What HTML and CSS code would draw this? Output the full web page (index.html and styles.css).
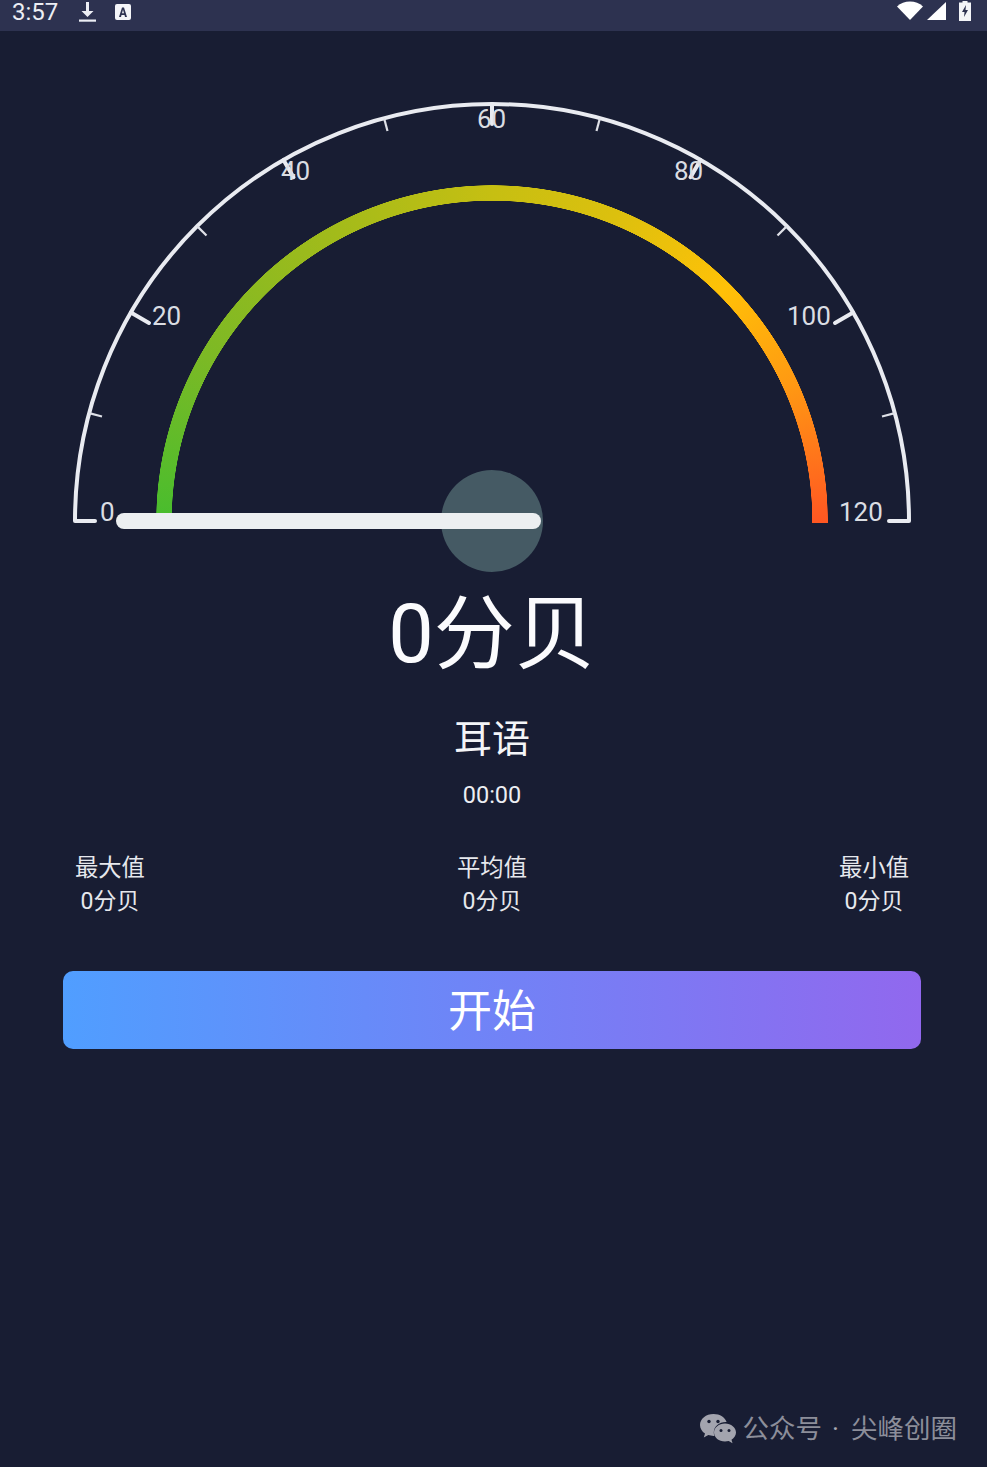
FILE: index.html
```html
<!DOCTYPE html>
<html lang="zh-CN">
<head>
<meta charset="utf-8">
<title>分贝仪</title>
<link rel="stylesheet" href="styles.css">
</head>
<body>
<div class="status-bar">
  <div class="status-left">
    <span class="time">3:57</span>
    <svg class="ic-download" viewBox="0 0 17 20"><path d="M7 0h3v9h4.500L8.500 15 2.500 9H7z" fill="#eceef4"/><rect x="0" y="17.500" width="17" height="2.200" fill="#eceef4"/></svg>
    <svg class="ic-a" viewBox="0 0 16 16"><rect width="16" height="16" rx="2" fill="#f4f5f8"/><path d="M4 13 7 3.500h2L12 13h-2l-.5-2h-3L6 13zM7 9.300h2L8 5.800z" fill="#2d3250"/></svg>
  </div>
  <div class="status-right">
    <svg class="ic-wifi" viewBox="0 0 26 19"><path d="M0 5.500C3.500 2 8 .5 13 .5s9.500 1.500 13 5L13 19z" fill="#fff"/></svg>
    <svg class="ic-signal" viewBox="0 0 19 18"><path d="M19 0v18H0z" fill="#fff"/></svg>
    <svg class="ic-battery" viewBox="0 0 12 20"><path d="M3.500 0h5v1.500H12V20H0V1.500h3.500z" fill="#f4f5f8"/><path d="M7 4 3 11h2.500L5 16l4-7H6.500z" fill="#2d3250"/></svg>
  </div>
</div>

<main class="screen">
  <section class="gauge">
    <div class="gauge-arc"></div>
    <svg class="gauge-svg" viewBox="0 31 984 545" width="984" height="545">
      <path class="dial" d="M75 521A417 417 0 0 1 909 521"/>
      <g class="tick-major">
        <path d="M75 521H95"/><path d="M130.900 312.500 149 323"/><path d="M283.500 159.900 293.500 177.200"/><path d="M492 104V124"/><path d="M700.500 159.900 690.500 177.200"/><path d="M853.100 312.500 835 323"/><path d="M909 521H889"/>
      </g>
      <g class="tick-minor">
        <path d="M89.200 413.100 102 416.500"/><path d="M197.100 226.100 206.500 235.500"/><path d="M384.100 118.200 387.500 131"/><path d="M599.900 118.200 596.500 131"/><path d="M786.900 226.100 777.500 235.500"/><path d="M894.800 413.100 882 416.500"/>
      </g>
      <g class="tick-labels">
        <text x="100" y="521">0</text>
        <text x="152" y="325">20</text>
        <text x="281" y="180">40</text>
        <text x="477" y="128">60</text>
        <text x="674" y="180">80</text>
        <text x="787" y="325">100</text>
        <text x="839" y="521">120</text>
      </g>
      <circle class="hub" cx="492" cy="521" r="51"/>
      <rect class="needle" x="116" y="513" width="425" height="16" rx="8"/>
    </svg>
  </section>

  <h1 class="reading">0分贝</h1>
  <p class="level">耳语</p>
  <p class="timer">00:00</p>

  <div class="stats">
    <div class="stat"><span>最大值</span><span class="stat-value">0分贝</span></div>
    <div class="stat"><span>平均值</span><span class="stat-value">0分贝</span></div>
    <div class="stat"><span>最小值</span><span class="stat-value">0分贝</span></div>
  </div>

  <button class="start" type="button">开始</button>

  <footer class="mark">
    <svg class="ic-wechat" viewBox="0 0 36 30">
      <path d="M13.500 0C6 0 0 4.900 0 11c0 3.500 2 6.600 5 8.600L3.800 23.500l4.500-2.400c1.600.5 3.400.8 5.200.8h.9c-.4-1.100-.6-2.200-.6-3.400 0-5.800 5.400-10.400 12-10.400h.8C25.300 3.500 19.900 0 13.500 0z" fill="#a3a4ae"/>
      <path d="M36 18.500c0-5-4.900-9-11-9s-11 4-11 9 4.900 9 11 9c1.300 0 2.500-.2 3.700-.5l3.800 2.200-1-3.400c2.700-1.800 4.500-4.400 4.500-7.300z" fill="#a3a4ae"/>
      <circle cx="9" cy="7.500" r="1.700" fill="#181d33"/><circle cx="18" cy="7.500" r="1.700" fill="#181d33"/>
      <circle cx="21" cy="16.500" r="1.500" fill="#181d33"/><circle cx="29" cy="16.500" r="1.500" fill="#181d33"/>
    </svg>
    <span class="mark-name">公众号</span><span class="mark-dot">·</span><span class="mark-name">尖峰创圈</span>
  </footer>
</main>
</body>
</html>
```
FILE: styles.css
```css
* { box-sizing: border-box; }
html, body { margin: 0; padding: 0; }
body {
  width: 987px;
  height: 1467px;
  overflow: hidden;
  background: #181d33;
  color: #f4f5f8;
  font-family: Roboto, "Noto Sans CJK SC", sans-serif;
}
.status-bar {
  height: 31px;
  background: #2d3250;
  display: flex;
  justify-content: space-between;
  padding: 0 16px 0 12px;
}
.status-left, .status-right { display: flex; align-items: flex-start; }
.time { font-size: 24px; line-height: 25px; color: #eceef4; }
.ic-download { width: 17px; height: 20px; margin: 2px 0 0 21px; }
.ic-a { width: 16px; height: 16px; margin: 4px 0 0 19px; }
.ic-wifi { width: 26px; height: 19px; margin-top: 1px; }
.ic-signal { width: 19px; height: 18px; margin: 2px 0 0 4px; }
.ic-battery { width: 12px; height: 20px; margin: 1px 0 0 13px; }

.screen { width: 984px; }
.gauge { position: relative; height: 545px; }
.gauge-arc {
  position: absolute;
  left: 156px;
  top: 154px;
  width: 672px;
  height: 338px;
  background: conic-gradient(from 270deg at 336px 336px,
    #48bd2e 0deg, #7cb925 30deg, #a3bb1a 62deg, #c6bf12 90deg, #dcc00e 112deg, #ffc107 135deg,
    #ff9a12 155deg, #ff5722 180deg, #ff5722 269deg, #48bd2e 270deg);
  -webkit-mask: radial-gradient(circle at 336px 336px, transparent 320px, #000 320.500px, #000 335.500px, transparent 336px);
  mask: radial-gradient(circle at 336px 336px, transparent 320px, #000 320.500px, #000 335.500px, transparent 336px);
}
.gauge-svg { position: relative; display: block; }
.dial { fill: none; stroke: #e9ebf1; stroke-width: 4; }
.tick-major path { fill: none; stroke: #e9ebf1; stroke-width: 4; stroke-linecap: round; }
.tick-minor path { fill: none; stroke: #dfe1e8; stroke-width: 2.200; }
.tick-labels text { font-size: 26px; fill: #dadde3; }
.hub { fill: #455a64; }
.needle { fill: #eceff1; }

.reading {
  margin: 15px 0 0;
  font-size: 81px;
  line-height: 88px;
  font-weight: 400;
  text-align: center;
  color: #fbfbfd;
}
.level {
  margin: 38px 0 0;
  font-size: 38px;
  line-height: 44px;
  text-align: center;
  color: #f4f5f8;
}
.timer {
  margin: 19px 0 0;
  font-size: 23.500px;
  line-height: 30px;
  text-align: center;
  color: #eceef2;
}
.stats {
  display: flex;
  justify-content: space-between;
  padding: 0 75px;
  margin-top: 41px;
}
.stat {
  display: flex;
  flex-direction: column;
  align-items: center;
  font-size: 23.300px;
  line-height: 34px;
  color: #e6e8ed;
}
.stat-value { font-size: 23px; }
.start {
  display: block;
  width: 858px;
  height: 78px;
  margin: 52px 0 0 63px;
  padding: 0 0 4px;
  border: 0;
  border-radius: 10px;
  background: linear-gradient(90deg, #509eff, #9168ee);
  color: #fff;
  font-family: inherit;
  font-size: 44px;
}
.mark {
  display: flex;
  align-items: center;
  justify-content: flex-end;
  margin: 364px 27px 0 0;
  font-size: 26.500px;
  line-height: 32px;
  color: #8c8e9a;
}
.ic-wechat { width: 36px; height: 30px; margin-right: 7px; }
.mark-dot { margin: 0 12px 0 10px; color: #a8aab4; }
```
